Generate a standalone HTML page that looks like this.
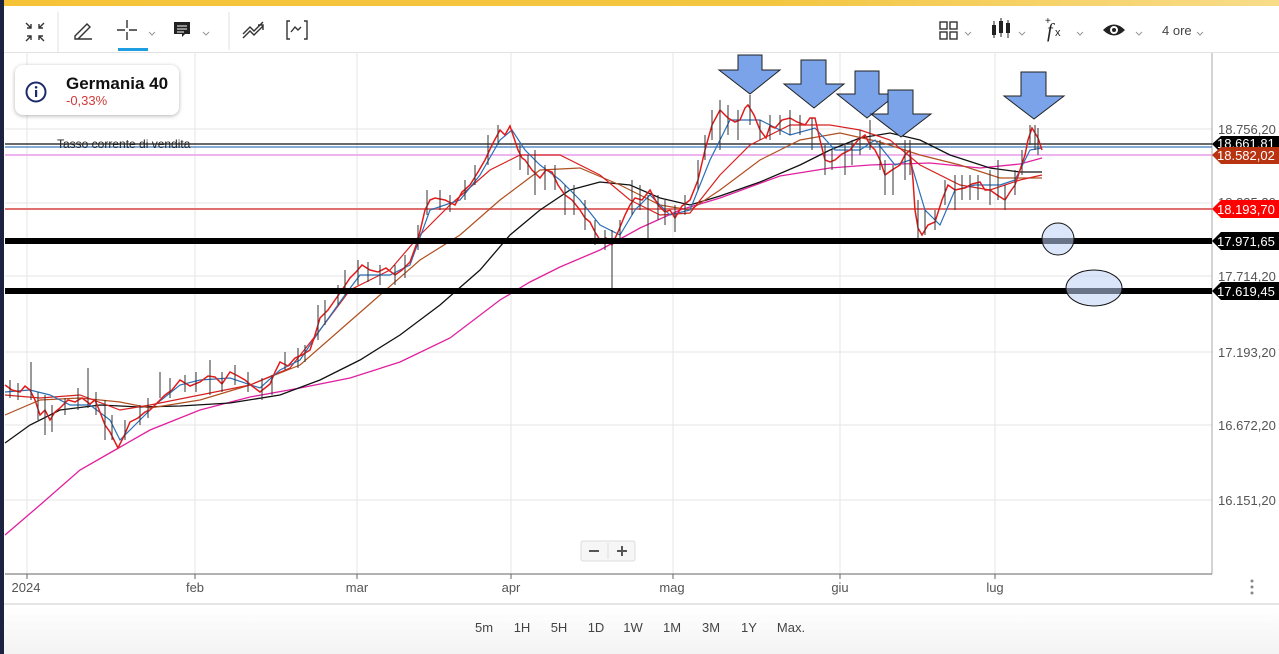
<!DOCTYPE html>
<html><head><meta charset="utf-8"><style>
html,body{margin:0;padding:0;width:1279px;height:654px;overflow:hidden;background:#fff;font-family:"Liberation Sans",sans-serif;}
.abs{position:absolute}
.tf{position:absolute;top:620px;font-size:13px;color:#444;transform:translateX(-50%)}
</style></head><body>
<div class="abs" style="left:0;top:0;width:1279px;height:6px;background:linear-gradient(90deg,#f6c338,#f3c640 60%,#f8dc8a);"></div>
<div class="abs" style="left:0;top:0;width:4px;height:654px;background:#1b2340;"></div>
<div class="abs" style="left:4px;top:52px;width:1275px;height:1px;background:#e2e2e2;"></div>
<svg class="abs" style="left:0;top:0" width="1279" height="654" xmlns="http://www.w3.org/2000/svg">
 <g stroke="#333" stroke-width="1.4" fill="none">
  <path d="M26 23l5 5M31 24v4h-4M44 23l-5 5M39 24v4h4M26 41l5-5M27 36h4v4M44 41l-5-5M43 36h-4v4"/>
  <path d="M75 36l12-12 3 3-12 12h-3z M75 39h17"/>
  <path d="M127 20v8M127 32v8M117 30h8M129 30h8"/>
  <path d="M149 32l3 3 3-3M203 32l3 3 3-3M965 32l3 3 3-3M1019 32l3 3 3-3M1077 32l3 3 3-3M1136 32l3 3 3-3M1197 32l3 3 3-3" stroke="#999" stroke-width="1"/>
  <path d="M243 38l7-7 4 4 9-9M243 34l7-7 4 4 9-9M258 25h5v5"/>
  <path d="M290 21h-3v18h3M304 21h3v18h-3M291 32l4-5 3 3 3-3"/>
  <rect x="940" y="22" width="7" height="7"/><rect x="950" y="22" width="7" height="7"/><rect x="940" y="32" width="7" height="7"/><rect x="950" y="32" width="7" height="7"/>
 </g>
 <rect x="118" y="48" width="30" height="3" fill="#1e9ee0"/>
 <line x1="58" y1="12" x2="58" y2="52" stroke="#e2e2e2"/>
 <line x1="229" y1="12" x2="229" y2="50" stroke="#e2e2e2"/>
 <path d="M174 22h16v12h-5l-3 3v-3h-8z" fill="#222"/>
 <path d="M177 26h10M177 29h10M177 32h7" stroke="#fff" stroke-width="1"/>
 <g fill="#222"><rect x="992" y="25" width="4" height="10"/><rect x="999" y="21" width="4" height="12"/><rect x="1006" y="23" width="4" height="10"/></g>
 <g stroke="#222" stroke-width="1"><path d="M994 21v17M1001 18v19M1008 20v18"/></g>
 <text x="1047" y="37" font-family="Liberation Serif,serif" font-style="italic" font-size="20" fill="#222">f</text>
 <text x="1055" y="36" font-size="11" fill="#222">x</text><text x="1045" y="24" font-size="10" fill="#222">+</text>
 <path d="M1103 30q11-11 22 0q-11 11-22 0z" fill="#222"/><circle cx="1114" cy="30" r="4" fill="#fff"/><circle cx="1114" cy="30" r="2" fill="#222"/>
 <text x="1162" y="35" font-size="13" fill="#444">4 ore</text>

 <g stroke="#e6e6e6" stroke-width="1">
  <path d="M5 129H1212M5 203H1212M5 276H1212M5 352H1212M5 425H1212M5 500H1212"/>
  <path d="M27 53V574M195 53V574M357 53V574M511 53V574M673 53V574M840 53V574M995 53V574"/>
 </g>
 <line x1="1212" y1="53" x2="1212" y2="574" stroke="#aaa"/>
 <line x1="5" y1="574" x2="1212" y2="574" stroke="#666"/>
 <line x1="4" y1="604" x2="1279" y2="604" stroke="#e5e5e5" stroke-width="2"/>
 <line x1="5" y1="144" x2="1212" y2="144" stroke="#111" stroke-width="1.2"/>
 <line x1="5" y1="147" x2="1212" y2="147" stroke="#3a7bbf" stroke-width="1.2"/>
 <line x1="5" y1="155" x2="1212" y2="155" stroke="#e89be8" stroke-width="1.5"/>
 <line x1="5" y1="209" x2="1212" y2="209" stroke="#e07070" stroke-width="2"/>
 <polyline fill="none" stroke="#e020a0" stroke-width="1.3" points="5,535 40,505 80,470 115,450 150,430 200,410 250,397 300,388 350,378 400,362 450,338 500,300 530,282 560,267 600,250 640,228 680,210 720,198 780,176 830,168 870,165 930,163 980,168 1020,164 1042,158"/>
 <polyline fill="none" stroke="#111" stroke-width="1.3" points="5,443 30,425 60,410 100,405 140,407 180,406 230,403 280,395 320,380 360,360 400,335 440,305 480,270 510,235 540,210 570,190 600,182 630,185 660,198 690,205 720,196 760,182 800,165 830,150 860,138 890,133 920,140 950,155 990,168 1020,172 1042,172"/>
 <polyline fill="none" stroke="#b05020" stroke-width="1.2" points="5,415 40,400 80,398 120,402 150,408 200,400 250,385 300,365 340,330 380,295 420,260 460,235 500,200 540,170 580,168 620,185 660,205 690,210 720,190 760,160 800,140 840,133 880,142 920,155 960,165 1000,178 1042,178"/>
 <polyline fill="none" stroke="#d82020" stroke-width="1.2" points="5,395 40,398 80,395 120,410 150,405 200,395 250,385 290,368 320,330 350,290 390,270 420,235 450,205 490,170 520,155 560,155 600,175 630,200 660,215 690,213 720,175 750,145 790,125 830,125 860,130 890,140 920,165 960,185 990,190 1020,180 1042,175"/>
 <polyline fill="none" stroke="#2a6fb8" stroke-width="1.2" points="5,392 30,390 50,395 70,405 90,405 110,420 120,440 135,425 155,405 180,385 200,380 230,378 260,388 280,370 300,360 320,330 345,295 360,275 390,275 410,265 430,210 460,200 480,175 500,140 512,130 525,150 540,165 560,180 580,200 600,225 620,235 635,210 650,195 670,215 690,210 710,160 730,120 760,120 790,135 815,128 835,150 860,150 875,140 895,165 910,160 925,210 940,225 955,190 975,185 1000,185 1015,180 1030,150 1042,148"/>
 <polyline fill="none" stroke="#e21a1a" stroke-width="1.5" points="5,385 12,390 20,392 25,386 30,390 35,400 40,415 45,410 50,420 55,412 60,408 68,400 75,402 82,398 90,404 95,400 100,412 105,425 110,432 114,440 118,448 124,436 130,422 138,418 145,412 150,410 158,402 165,395 172,390 180,380 190,386 200,382 208,376 215,377 222,384 230,372 238,376 245,380 252,386 260,392 265,388 270,384 275,372 280,362 288,366 295,358 302,355 310,350 315,335 320,318 328,310 335,300 342,290 350,278 356,272 362,265 370,270 378,272 386,268 395,275 402,270 410,262 418,240 425,210 430,200 435,198 445,200 455,205 462,192 470,185 478,172 485,160 492,145 500,130 505,135 510,126 514,138 518,150 522,158 525,160 532,170 540,178 546,170 552,172 558,185 565,195 572,200 580,210 585,218 590,222 595,232 600,240 606,238 612,245 618,232 625,215 630,205 635,198 642,200 650,190 658,205 665,212 670,210 675,218 682,206 690,200 698,180 705,150 712,125 720,110 728,118 735,122 740,120 745,108 748,105 754,115 760,130 766,138 770,126 775,128 782,120 790,118 797,122 805,125 810,118 815,118 820,140 825,160 830,162 835,160 842,154 850,150 858,140 865,135 870,145 875,150 880,160 885,175 892,170 900,165 905,155 910,150 913,180 915,210 918,228 922,235 928,225 935,222 942,200 948,185 955,190 965,188 972,184 980,182 985,190 990,190 997,195 1005,200 1010,192 1015,185 1020,170 1025,155 1028,140 1032,128 1035,133 1038,138 1042,150"/>
 <g stroke="#333" stroke-width="1">
  <path d="M31 362V400M45 395V435M88 368V408M105 400V440M160 372V398M210 360V395M262 378V400M318 305V340M358 260V285M427 190V215M488 135V165M535 150V195M574 185V215M612 230V290M632 180V215M648 195V240M675 205V232M720 100V150M750 95V125M812 118V150M845 145V175M870 120V150M893 165V195M905 140V180M918 200V240M955 175V210M1005 185V210M1030 125V145M1038 128V155"/>
  <path d="M10 380V398M18 383V400M38 392V420M52 405V432M65 398V415M78 388V410M96 392V415M112 415V440M125 420V440M140 405V425M148 398V418M170 378V398M185 375V392M196 372V392M222 372V392M235 365V385M248 372V392M272 375V395M285 352V370M298 348V368M305 345V362M325 300V325M338 285V305M345 270V295M368 262V282M380 265V285M395 265V285M405 255V278M418 225V250M440 190V210M450 195V212M465 180V200M475 165V185M498 125V145M520 145V170M528 155V175M545 165V190M555 165V190M565 185V215M585 200V230M595 220V245M605 230V250M620 220V240M640 185V210M658 195V220M665 200V225M685 195V215M698 160V190M705 135V160M712 110V140M728 105V135M738 110V140M760 120V140M770 115V140M780 115V135M790 110V135M800 115V135M825 145V175M832 150V170M852 140V165M860 130V155M880 140V170M885 160V195M910 140V175M925 210V235M935 210V230M945 180V205M962 175V200M970 175V200M978 175V200M990 170V205M998 160V200M1015 170V195M1022 150V175M1035 125V150"/>
 </g>
 <rect x="5" y="238" width="1207" height="6" fill="#000"/>
 <rect x="5" y="288" width="1207" height="6" fill="#000"/>
 <ellipse cx="1058" cy="239" rx="16" ry="16" fill="rgba(190,210,245,0.55)" stroke="#111"/>
 <ellipse cx="1094" cy="288" rx="28" ry="18" fill="rgba(190,210,245,0.55)" stroke="#111"/>
 <g fill="#7aa3ea" stroke="#222" stroke-width="1">
  <path d="M738 55h24v15h18l-30 24-31-24h19z"/>
  <path d="M801 60h25v24h18l-30 24-30-24h17z"/>
  <path d="M855 71h24v23h18l-30 24-30-24h18z"/>
  <path d="M888 90h25v24h18l-30 23-30-23h17z"/>
  <path d="M1021 72h25v24h18l-30 23-30-23h17z"/>
 </g>
 <g font-size="13" fill="#555">
  <text x="1218" y="134">18.756,20</text>
  <text x="1218" y="207">18.235,20</text>
  <text x="1218" y="281">17.714,20</text>
  <text x="1218" y="357">17.193,20</text>
  <text x="1218" y="430">16.672,20</text>
  <text x="1218" y="505">16.151,20</text>
 </g>
 <g font-size="13">
  <path d="M1212 144l9-8h58v17h-58z" fill="#000"/><text x="1217" y="148" fill="#fff">18.661,81</text>
  <path d="M1212 155l9-8h58v17h-58z" fill="#b8330f"/><text x="1217" y="160" fill="#fff">18.582,02</text>
  <path d="M1212 209l9-9h58v18h-58z" fill="#f00"/><text x="1217" y="214" fill="#fff">18.193,70</text>
  <path d="M1212 241l9-9h58v18h-58z" fill="#000"/><text x="1217" y="246" fill="#fff">17.971,65</text>
  <path d="M1212 291l9-9h58v18h-58z" fill="#000"/><text x="1217" y="296" fill="#fff">17.619,45</text>
 </g>
 <g stroke="#666"><path d="M27 574v5M195 574v5M357 574v5M511 574v5M673 574v5M840 574v5M995 574v5"/></g>
 <g font-size="13" fill="#555" text-anchor="middle">
  <text x="26" y="592">2024</text><text x="195" y="592">feb</text><text x="357" y="592">mar</text><text x="511" y="592">apr</text><text x="672" y="592">mag</text><text x="840" y="592">giu</text><text x="995" y="592">lug</text>
 </g>
 <g fill="#888"><circle cx="1252" cy="581" r="1.5"/><circle cx="1252" cy="587" r="1.5"/><circle cx="1252" cy="593" r="1.5"/></g>
 <text x="57" y="148" font-size="12" fill="#222">Tasso corrente di vendita</text>
 <rect x="581" y="541" width="54" height="20" rx="2" fill="#f6f6f6" stroke="#ddd"/>
 <line x1="608" y1="543" x2="608" y2="559" stroke="#ddd"/>
 <path d="M589 551h10M617 551h10M622 546v10" stroke="#555" stroke-width="2"/>
</svg>
<div class="abs" style="left:4px;top:606px;width:1275px;height:48px;background:linear-gradient(#fff,#f3f3f3);"></div>
<span class="tf" style="left:484px">5m</span><span class="tf" style="left:522px">1H</span><span class="tf" style="left:559px">5H</span><span class="tf" style="left:596px">1D</span><span class="tf" style="left:633px">1W</span><span class="tf" style="left:672px">1M</span><span class="tf" style="left:711px">3M</span><span class="tf" style="left:749px">1Y</span><span class="tf" style="left:791px">Max.</span>
<div class="abs" style="left:15px;top:65px;width:164px;height:50px;background:#fff;border-radius:8px;box-shadow:0 1px 4px rgba(0,0,0,.3);">
 <svg class="abs" style="left:10px;top:16px" width="22" height="22"><circle cx="11" cy="11" r="9.5" fill="none" stroke="#1b2a6b" stroke-width="2"/><rect x="10" y="9" width="2.2" height="7" fill="#1b2a6b"/><circle cx="11.1" cy="6.3" r="1.3" fill="#1b2a6b"/></svg>
 <div class="abs" style="left:51px;top:9px;font-size:17px;font-weight:bold;color:#111">Germania 40</div>
 <div class="abs" style="left:51px;top:28px;font-size:13px;color:#d23a3a">-0,33%</div>
</div>
</body></html>
